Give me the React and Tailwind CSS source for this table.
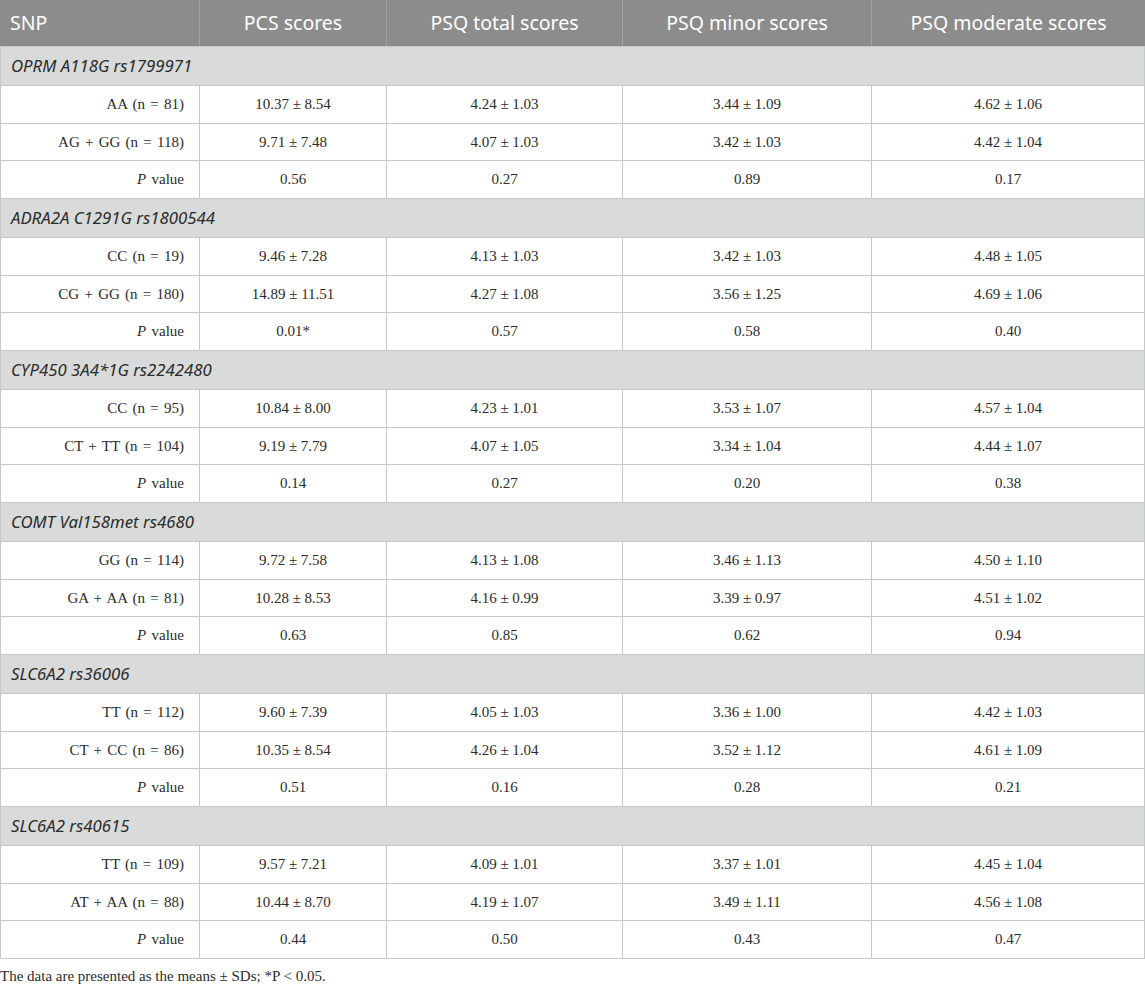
import React from 'react';

const groups = [
  {
    name: 'OPRM A118G rs1799971',
    rows: [
      ['AA (n = 81)', '10.37 ± 8.54', '4.24 ± 1.03', '3.44 ± 1.09', '4.62 ± 1.06'],
      ['AG + GG (n = 118)', '9.71 ± 7.48', '4.07 ± 1.03', '3.42 ± 1.03', '4.42 ± 1.04'],
    ],
    p: ['0.56', '0.27', '0.89', '0.17'],
  },
  {
    name: 'ADRA2A C1291G rs1800544',
    rows: [
      ['CC (n = 19)', '9.46 ± 7.28', '4.13 ± 1.03', '3.42 ± 1.03', '4.48 ± 1.05'],
      ['CG + GG (n = 180)', '14.89 ± 11.51', '4.27 ± 1.08', '3.56 ± 1.25', '4.69 ± 1.06'],
    ],
    p: ['0.01*', '0.57', '0.58', '0.40'],
  },
  {
    name: 'CYP450 3A4*1G rs2242480',
    rows: [
      ['CC (n = 95)', '10.84 ± 8.00', '4.23 ± 1.01', '3.53 ± 1.07', '4.57 ± 1.04'],
      ['CT + TT (n = 104)', '9.19 ± 7.79', '4.07 ± 1.05', '3.34 ± 1.04', '4.44 ± 1.07'],
    ],
    p: ['0.14', '0.27', '0.20', '0.38'],
  },
  {
    name: 'COMT Val158met rs4680',
    rows: [
      ['GG (n = 114)', '9.72 ± 7.58', '4.13 ± 1.08', '3.46 ± 1.13', '4.50 ± 1.10'],
      ['GA + AA (n = 81)', '10.28 ± 8.53', '4.16 ± 0.99', '3.39 ± 0.97', '4.51 ± 1.02'],
    ],
    p: ['0.63', '0.85', '0.62', '0.94'],
  },
  {
    name: 'SLC6A2 rs36006',
    rows: [
      ['TT (n = 112)', '9.60 ± 7.39', '4.05 ± 1.03', '3.36 ± 1.00', '4.42 ± 1.03'],
      ['CT + CC (n = 86)', '10.35 ± 8.54', '4.26 ± 1.04', '3.52 ± 1.12', '4.61 ± 1.09'],
    ],
    p: ['0.51', '0.16', '0.28', '0.21'],
  },
  {
    name: 'SLC6A2 rs40615',
    rows: [
      ['TT (n = 109)', '9.57 ± 7.21', '4.09 ± 1.01', '3.37 ± 1.01', '4.45 ± 1.04'],
      ['AT + AA (n = 88)', '10.44 ± 8.70', '4.19 ± 1.07', '3.49 ± 1.11', '4.56 ± 1.08'],
    ],
    p: ['0.44', '0.50', '0.43', '0.47'],
  },
];

const cols = 'grid grid-cols-[200px_187px_236px_249px_273px]';
const sans = { fontFamily: '"Noto Sans", "Open Sans", sans-serif' };
const serif = { fontFamily: '"Liberation Serif", serif' };

const DataRow = ({ label, values }) => (
  <div className={`${cols} h-[37.67px] border-b border-[#c8c8c8] text-[15px] text-[#2b2b2b]`} style={serif}>
    <div className="flex items-center justify-end pr-[15px] border-l border-r border-[#c8c8c8] [word-spacing:1.5px]">{label}</div>
    {values.map((v, i) => (
      <div key={i} className="flex items-center justify-center border-r border-[#c8c8c8]">{v}</div>
    ))}
  </div>
);

export default function App() {
  return (
    <div className="w-[1145px] bg-white">
      <div className={`${cols} h-[47px] bg-[#8c8c8c] text-white text-[19.5px] border-b border-[#c8c8c8]`} style={sans}>
        <div className="flex items-center pl-[10px] border-r border-[#a3a3a3]">SNP</div>
        <div className="flex items-center justify-center border-r border-[#a3a3a3]">PCS scores</div>
        <div className="flex items-center justify-center border-r border-[#a3a3a3]">PSQ total scores</div>
        <div className="flex items-center justify-center border-r border-[#a3a3a3]">PSQ minor scores</div>
        <div className="flex items-center justify-center">PSQ moderate scores</div>
      </div>

      {groups.map((g) => (
        <div key={g.name}>
          <div className="h-[39px] flex items-center pl-[10px] bg-[#d9dbdb] border-b border-l border-r border-[#c8c8c8] text-[16.8px] italic text-[#2b2b2b]" style={sans}>
            {g.name}
          </div>
          {g.rows.map((r) => (
            <DataRow key={r[0]} label={r[0]} values={r.slice(1)} />
          ))}
          <DataRow label={<span><i>P</i> value</span>} values={g.p} />
        </div>
      ))}

      <p className="mt-[6px] text-[15px] text-[#2b2b2b]" style={serif}>
        The data are presented as the means ± SDs; *P &lt; 0.05.
      </p>
    </div>
  );
}
